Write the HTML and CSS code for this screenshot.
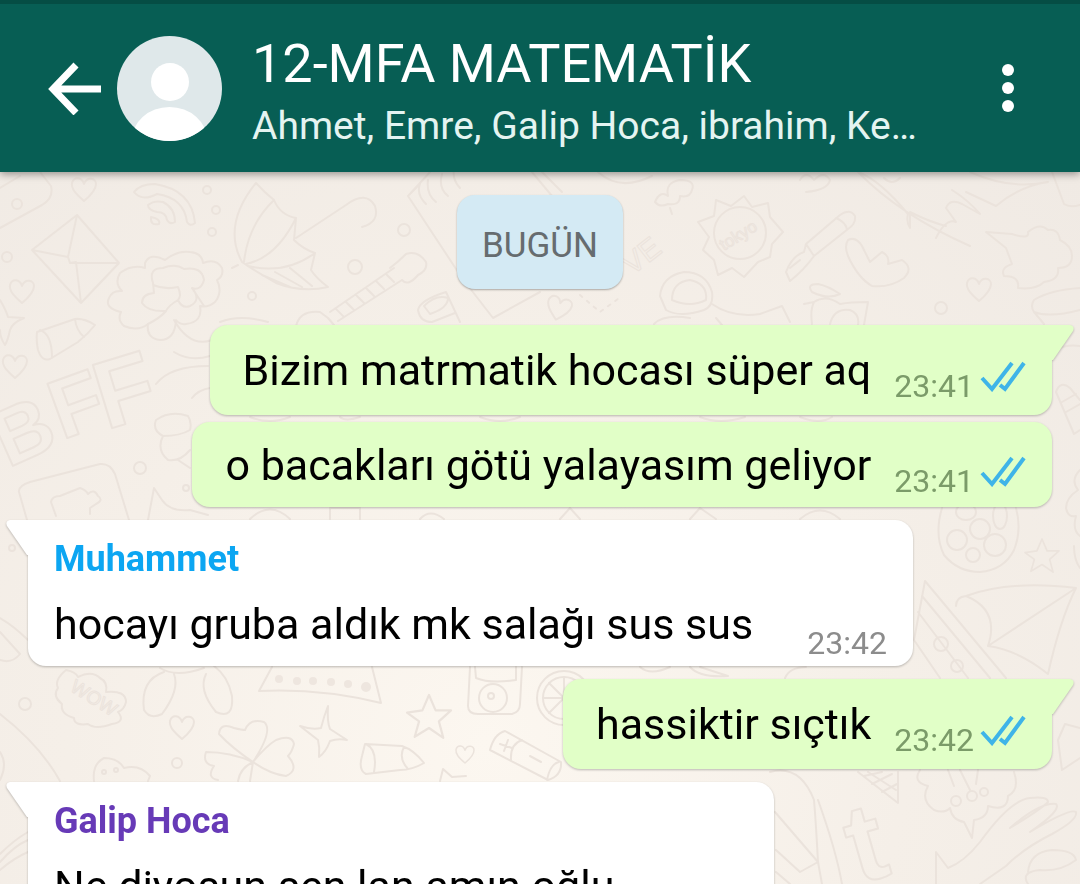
FILE: index.html
```html
<!DOCTYPE html>
<html lang="tr">
<head>
    <meta charset="utf-8">
    <meta name="viewport" content="width=device-width, initial-scale=1">
    <title>12-MFA MATEMATİK</title>
    <link rel="stylesheet" href="styles.css">
</head>
<body>
    <header class="topbar">
        <button class="back" aria-label="Geri">
            <svg width="54" height="54" viewBox="0 0 54 54"><path d="M28 4L5 28L28 52M5 28H53" fill="none" stroke="#fff" stroke-width="7"/></svg>
        </button>
        <svg class="avatar" width="105" height="105" viewBox="0 0 105 105">
            <defs><clipPath id="round"><circle cx="52.5" cy="52.5" r="52.5"/></clipPath></defs>
            <g clip-path="url(#round)">
                <rect width="105" height="105" fill="#dfe8ea"/>
                <circle cx="53" cy="46" r="19" fill="#fff"/>
                <ellipse cx="52.5" cy="105" rx="38" ry="34" fill="#fff"/>
            </g>
        </svg>
        <div class="titles">
            <h1 class="group-name">12-MFA MATEMATİK</h1>
            <p class="members">Ahmet, Emre, Galip Hoca, ibrahim, Ke…</p>
        </div>
        <button class="menu" aria-label="Menü">
            <svg width="12" height="48" viewBox="0 0 12 48" fill="#fff"><circle cx="6" cy="6" r="6"/><circle cx="6" cy="24" r="6"/><circle cx="6" cy="42" r="6"/></svg>
        </button>
    </header>
    <main class="chat">
        <svg class="wallpaper" viewBox="0 172 1080 712" preserveAspectRatio="xMidYMin slice" aria-hidden="true">
            <defs>
                <path id="heart" d="M0 12C-8 5-13 0-12-6C-10-13-2-12 0-5C3-13 12-11 12-5C12 1 6 7 0 12Z"/>
                <path id="star" d="M0-20L6-6L20-6L9 4L13 19L0 10L-13 18L-9 4L-20-4L-6-6Z"/>
            </defs>
            <!-- top left: card, envelope, wifi -->
            <path d="M40 172L51 186Q54 198 42 205L0 228M0 188L20 176"/>
            <circle cx="17" cy="204" r="5"/>
            <use href="#heart" transform="translate(84 189)"/>
            <path d="M77 215L32 250L81 303L119 263ZM32 250L68 257L77 215M68 257L70 263L119 263M70 263L76 262L81 303"/>
            <path d="M134 192Q140 184 155 184Q192 190 195 223Q190 227 187 222Q184 198 157 194Q142 202 134 192ZM148 205Q154 200 163 202Q175 208 175 222Q170 225 167 220Q166 212 157 212Q148 210 148 205Z"/>
            <path d="M151 217Q161 219 159 224Q150 226 151 217Z"/>
            <circle cx="207" cy="190" r="4"/><circle cx="216" cy="210" r="4"/><circle cx="212" cy="232" r="4"/>
            <circle cx="7" cy="257" r="5"/>
            <use href="#heart" transform="translate(22 291)"/>
            <path d="M0 300Q6 310 8 317L24 318Q12 323 10 330Q8 340 5 345Q0 338 0 330"/>
            <!-- cloud flower -->
            <path d="M145 263Q150 252 165 260Q178 250 190 252Q202 253 203 263Q216 258 222 268Q224 276 217 280Q223 292 215 302Q208 308 200 306Q203 322 186 324Q180 325 176 320Q175 340 160 340Q146 338 148 324Q138 332 124 326Q117 320 121 312Q104 308 109 298Q112 290 122 291Q114 283 120 273Q132 264 145 268Z"/>
            <path d="M153 283Q148 268 163 268Q175 263 184 269Q202 266 204 280Q201 291 192 288Q202 300 190 306Q182 309 178 300Q168 306 166 311Q148 312 142 303Q142 294 154 293ZM153 285Q165 290 178 287Q182 296 178 300M166 311Q160 318 148 324M192 288L204 306"/>
            <!-- umbrella -->
            <path d="M256 183Q222 225 242 262Q250 268 276 283Q302 293 328 287Q316 278 311 270L315 253Q303 249 294 240L296 218Q280 215 274 200Q264 192 256 183ZM244 262Q248 225 274 200M246 264Q276 258 296 218M248 266Q285 275 315 253M296 238L346 205Q366 190 375 206Q380 222 362 227M238 265L232 268M262 275L290 287M275 272L302 287M290 268L312 286"/>
            <!-- guitar -->
            <path d="M296 326Q300 310 320 312L328 318L334 325M330 312L394 268M338 321L402 280M336 309L344 317M346 302L354 310M356 295L364 303M366 288L374 296M376 281L384 289M386 274L394 282M390 268Q398 262 406 254Q418 250 426 262Q428 270 418 275Q408 287 402 280"/>
            <circle cx="355" cy="267" r="7"/><circle cx="404" cy="230" r="6"/><circle cx="252" cy="296" r="4"/>
            <!-- notepad and cup -->
            <path d="M430 172L408 196L462 278L493 318L540 292M408 196L420 184Q416 194 426 204M428 180Q426 194 436 202M442 174Q438 188 448 196M454 168Q452 180 460 188M418 310Q420 300 446 292L460 322M418 310Q420 322 432 322L455 313M424 306Q436 294 448 298Q448 308 430 314Z"/>
            <path d="M532 172L552 196M542 172L562 192M598 172Q620 192 652 176"/>
            <use href="#heart" transform="translate(559 308) rotate(15)"/>
            <path d="M580 295L600 312L622 296M586 288L604 280" stroke-dasharray="3 6"/>
            <text x="632" y="276" class="scribble" font-size="30" transform="rotate(-38 632 276)">VE</text>
            <!-- crayon, left letters, cushion -->
            <path d="M37 332L75 319Q84 318 95 325Q88 334 78 342L50 359Q42 362 38 350Q36 340 37 332ZM40 330Q52 334 52 358M75 319Q76 330 84 337"/>
            <use href="#heart" transform="translate(15 366)"/>
            <g class="letters">
                <text x="8" y="468" font-size="80" transform="rotate(-24 8 468)">B</text>
                <text x="62" y="440" font-size="84" transform="rotate(-20 62 440)">F</text>
                <text x="106" y="430" font-size="96" transform="rotate(-17 106 430)">F</text>
            </g>
            <path d="M27 520L19 492Q18 486 30 482L100 464Q110 463 115 474L129 520M56 516L51 502Q52 496 60 496L80 488Q86 490 88 494Q94 488 98 496Q104 500 96 504L90 508V514"/>
            <path d="M174 320Q190 348 212 340M174 352Q190 362 210 356M156 384Q170 366 208 366M192 398Q198 390 210 388M220 322Q240 314 268 322"/>
            <path d="M163 436Q152 430 156 420Q170 410 188 416Q192 422 190 430Q180 436 163 436Q156 450 168 460Q180 462 190 450M178 460L190 468M148 520L154 488L162 500Q170 512 190 510L208 515"/>
            <circle cx="140" cy="468" r="6"/><circle cx="186" cy="488" r="3"/>
            <!-- gap between bubbles -->
            <path d="M250 417Q270 425 290 417M340 417Q345 422 360 417M480 417Q500 425 520 417M700 417Q720 425 745 417M800 417Q820 425 832 417M250 519Q270 500 290 519M330 519V508H360V519M420 519Q430 508 444 519M560 519L570 508L580 519M690 519L700 508L716 519M800 519Q820 502 840 519"/>
            <!-- stamp -->
            <path d="M744 196L752 207L768 203L770 217L783 232L772 244L770 257L758 262L744 277L732 268L718 275L714 260L703 250L709 237L698 222L714 216L716 200L731 206Z"/>
            <circle cx="740" cy="233" r="26"/>
            <text x="724" y="251" class="scribble" font-size="17" transform="rotate(-32 724 251)">tokyo</text>
            <path d="M655 202Q660 190 668 196Q665 182 680 180Q696 180 692 190Q690 198 680 196Q680 206 668 204Q660 208 655 202M670 208L672 214"/>
            <!-- pen, mitten, surfboard -->
            <path d="M806 244L840 215Q850 208 855 216Q856 224 848 229L814 256ZM806 244L804 252Q792 256 786 272L790 281Q804 270 814 256M836 218Q846 222 847 230M790 268L800 260"/>
            <path d="M848 240Q856 236 862 246L870 262L882 252Q890 256 888 264L902 260Q914 268 904 278Q890 288 872 286Q858 278 848 256Q844 246 848 240Z"/>
            <path d="M858 172Q900 215 970 246M858 172Q880 180 908 214Q906 222 910 228L910 212Q930 222 946 226M900 178Q892 186 884 178M936 238Q946 218 956 222L946 208Q950 198 962 204L980 214Q968 200 952 190M970 172Q1010 190 1048 182Q1020 186 996 206L966 192M800 180Q806 170 814 180Q824 170 830 180Q828 190 806 192"/>
            <path d="M1052 172L1064 204Q1070 208 1080 205"/>
            <!-- tree, astronaut, bird -->
            <path d="M986 232L1012 234Q1030 240 1028 232Q1040 222 1048 230Q1058 228 1060 240Q1072 246 1072 256Q1072 268 1058 268Q1060 280 1044 282Q1036 290 1018 288Q1020 276 1004 276Q1000 268 1012 264L1006 248Z"/>
            <use href="#heart" transform="translate(979 289)"/>
            <circle cx="941" cy="308" r="6"/>
            <path d="M1080 288Q1050 290 1034 300Q1030 306 1034 312Q1050 318 1080 310M1034 312L1044 324M1056 350Q1066 344 1080 346"/>
            <path d="M660 296Q662 276 684 272Q706 272 712 292Q714 306 704 310Q680 318 666 310ZM672 300Q672 282 690 280Q708 284 706 300Q690 308 672 300ZM654 324Q664 314 690 318M712 304Q732 318 760 314L782 306L790 322M716 318L722 325M812 324Q810 310 814 302L804 304M814 302Q826 294 840 304Q850 302 868 302L864 325M830 324Q834 308 850 310Q860 314 858 325M812 292Q806 284 818 284Q828 286 840 294Q828 300 812 292Z"/>
            <!-- right: pencil, palette, paper boat -->
            <path d="M1056 392Q1060 380 1070 388L1080 400M1056 392L1074 434L1080 430M1062 402L1076 394M1066 412L1080 404"/>
            <path d="M1080 470Q1070 480 1078 490Q1066 498 1066 508Q1068 518 1076 516Q1072 530 1080 536M1074 546Q1074 560 1080 568"/>
            <path d="M942 508Q934 535 944 555Q958 572 980 572Q1004 570 1014 550Q1022 530 1016 508"/>
            <circle cx="957" cy="540" r="10"/><circle cx="980" cy="529" r="10"/><circle cx="995" cy="545" r="11"/><circle cx="973" cy="555" r="7"/>
            <ellipse cx="1000" cy="516" rx="7" ry="13"/><ellipse cx="966" cy="512" rx="10" ry="8"/>
            <use href="#star" transform="translate(1042 556) scale(.85)"/>
            <path d="M925 581L914 640L940 678M925 581L1006 678M922 596L990 678M918 612L968 678M956 606Q956 597 966 596Q1010 580 1076 588Q1060 620 1048 674Q1018 650 988 646Q1000 610 966 596M988 646L1076 588"/>
            <circle cx="941" cy="644" r="7"/><circle cx="957" cy="666" r="6"/>
            <path d="M1080 728L1065 724L1058 740L1062 770L1080 758"/>
            <!-- left edge beside the bubble -->
            <circle cx="12" cy="548" r="3"/><path d="M0 618Q14 626 28 640M0 632L20 654Q12 664 0 660"/>
            <circle cx="25" cy="704" r="6"/>
            <path d="M66 670Q76 672 78 677Q92 670 100 678Q108 682 106 692Q126 690 126 702Q124 710 118 712Q126 722 112 724Q96 730 88 724Q74 726 74 718Q60 714 62 704Q52 696 58 688Q54 680 66 670Z"/>
            <text x="69" y="690" class="scribble" font-size="19" transform="rotate(32 69 690)">WOW</text>
            <path d="M160 668Q176 678 204 668M164 672Q140 680 144 710Q150 720 162 714Q180 690 174 674M206 674Q198 690 216 712Q234 720 232 696Q228 676 214 666"/>
            <use href="#heart" transform="translate(182 727)"/>
            <path d="M272 667L259 691Q320 688 381 703L372 667"/>
            <g class="dots"><circle cx="279" cy="679" r="4"/><circle cx="297" cy="681" r="4"/><circle cx="313" cy="681" r="4"/><circle cx="331" cy="682" r="4"/><circle cx="348" cy="684" r="4"/><circle cx="366" cy="687" r="5"/></g>
            <!-- clover -->
            <path d="M253 762Q232 748 219 734Q220 722 234 728Q242 730 245 730Q250 718 264 722Q274 730 253 762Q266 746 276 740Q292 734 294 744Q292 752 288 756Q300 770 286 776Q270 774 253 762Q230 752 206 752Q202 764 214 766Q206 778 218 780M253 762Q240 768 238 781M253 762L250 781"/>
            <path d="M328 706Q327 722 330 729L347 740Q338 738 330 741Q326 752 319 757Q320 748 318 740L300 726Q312 730 321 728Q324 716 328 706Z"/>
            <use href="#star" transform="translate(429 717) scale(1.1)"/>
            <path d="M365 744L402 746Q414 750 424 763Q412 770 400 770L366 774Q358 770 362 756ZM366 744Q378 750 374 772M404 747Q398 758 408 769"/>
            <use href="#heart" transform="translate(465 754) scale(.75)"/>
            <path d="M505 731Q494 734 490 750L548 780Q562 776 561 762L505 731ZM522 740Q510 744 511 760M559 762Q550 764 547 780M500 744L512 748M508 740L504 751M530 756L541 762"/>
            <path d="M470 667L468 706Q468 714 478 714H512Q520 712 520 704L522 667M475 667L476 678Q490 684 516 680V667"/>
            <circle cx="493" cy="698" r="14"/><circle cx="491" cy="696" r="3"/>
            <circle cx="564" cy="698" r="27"/><circle cx="564" cy="698" r="21"/><path d="M564 677V719M543 698H585M549 683L579 713M549 713L579 683"/>
            <path d="M640 667Q650 676 670 667M690 667Q700 678 728 676L700 667M785 678Q790 667 806 667"/>
            <path d="M440 781L443 769L452 777L466 776M94 781Q92 764 104 758Q118 758 124 768Q140 764 150 776L148 781"/>
            <circle cx="177" cy="763" r="5"/><circle cx="104" cy="772" r="2"/><circle cx="116" cy="770" r="2"/>
            <path d="M0 714Q40 745 60 781M0 752Q8 764 0 780M0 854Q14 840 28 832M0 862Q14 846 28 840M0 870Q14 858 28 852"/>
            <!-- bottom right: rocket, cone, letter, bush, hand -->
            <path d="M770 772Q800 764 814 800Q816 824 818 862M818 800Q836 850 842 884M775 812L818 862L800 872L776 850M818 862L822 884M776 872L790 884"/>
            <path d="M858 772L898 803V772M864 776L882 772M872 784L892 774M882 792L897 784M868 772L896 790"/>
            <g class="letters">
                <text x="858" y="884" font-size="110" transform="rotate(-16 858 884)">t</text>
            </g>
            <path d="M920 770Q912 782 928 786Q920 800 934 810Q944 814 950 808Q952 820 964 822L972 838L974 820Q988 818 988 806Q1008 812 1008 796Q1020 790 1014 772M948 770L954 786M960 770L970 790M978 770L976 784"/>
            <circle cx="956" cy="801" r="5"/><circle cx="972" cy="796" r="5"/><circle cx="984" cy="792" r="4"/>
            <path d="M936 884L936 852L948 868Q964 862 980 842Q1010 800 1030 798Q1048 796 1048 802Q1040 810 1010 828Q1040 802 1056 804Q1062 810 1030 832Q1070 808 1076 812Q1078 820 1052 834Q1024 848 1006 866L980 884M1028 872Q1030 852 1052 850Q1074 850 1076 860Q1060 872 1040 870Q1020 872 1028 884"/>
        </svg>
        <div class="day">BUGÜN</div>
        <div class="message out tail">
            <p class="text">Bizim matrmatik hocası süper aq</p>
            <span class="time">23:41</span>
            <svg class="ticks" width="46" height="31" viewBox="0 0 46 31"><path d="M2 17L12 28L32 2M20 24L25 28L44 2"/></svg>
        </div>
        <div class="message out">
            <p class="text">o bacakları götü yalayasım geliyor</p>
            <span class="time">23:41</span>
            <svg class="ticks" width="46" height="31" viewBox="0 0 46 31"><path d="M2 17L12 28L32 2M20 24L25 28L44 2"/></svg>
        </div>
        <div class="message in tail">
            <div>
                <div class="sender blue">Muhammet</div>
                <p class="text">hocayı gruba aldık mk salağı sus sus</p>
            </div>
            <span class="time">23:42</span>
        </div>
        <div class="message out tail">
            <p class="text">hassiktir sıçtık</p>
            <span class="time">23:42</span>
            <svg class="ticks" width="46" height="31" viewBox="0 0 46 31"><path d="M2 17L12 28L32 2M20 24L25 28L44 2"/></svg>
        </div>
        <div class="message in tail">
            <div>
                <div class="sender purple">Galip Hoca</div>
                <p class="text">Ne diyosun sen lan amın oğlu</p>
            </div>
            <span class="time">23:42</span>
        </div>
    </main>
</body>
</html>
```

FILE: styles.css
```css
* {
    box-sizing: border-box;
}

body {
    margin: 0;
    height: 100vh;
    display: flex;
    flex-direction: column;
    overflow: hidden;
    font-family: Roboto, "Noto Sans", sans-serif;
    background-color: #f5efe8;
}

h1, p {
    margin: 0;
    font-weight: normal;
}

button {
    display: flex;
    padding: 0;
    border: none;
    background: none;
    cursor: pointer;
}

.topbar {
    position: relative;
    z-index: 1;
    display: flex;
    align-items: center;
    flex: none;
    height: 172px;
    padding: 0 66px 0 48px;
    border-top: 4px solid #054d44;
    background-color: #075e54;
    box-shadow: 0 2px 8px rgba(0, 0, 0, 0.4);
    color: #fff;
}

.avatar {
    flex: none;
    margin-left: 15px;
}

.titles {
    flex: 1;
    min-width: 0;
    margin-left: 30px;
    padding-top: 12px;
}

.group-name {
    font-size: 54px;
    line-height: 64px;
}

.members {
    font-size: 39px;
    line-height: 60px;
    color: #e4f4f1;
}

.chat {
    position: relative;
    flex: 1;
    display: flex;
    flex-direction: column;
    align-items: flex-start;
    min-height: 0;
    padding: 23px 28px;
    overflow: hidden;
    background: radial-gradient(ellipse at 45% 80%, #fcf7f0, #f5efe8 50%, #f0eae4);
}

/* Doodles behind the messages */
.wallpaper {
    position: absolute;
    top: 0;
    left: 0;
    width: 100%;
    height: 100%;
    fill: none;
    stroke: #ebe3dc;
    stroke-width: 2;
    stroke-linejoin: round;
    stroke-linecap: round;
    font-family: "Liberation Sans", sans-serif;
}

.letters {
    font-weight: bold;
}

.scribble {
    stroke-width: 1;
}

.dots {
    fill: #eee6df;
    stroke: none;
}

.day {
    position: relative;
    align-self: center;
    flex: none;
    margin-bottom: 30px;
    padding: 8px 25px 0;
    border-radius: 18px;
    background-color: #d4eaf4;
    box-shadow: 0 1px 2px rgba(0, 0, 0, 0.3);
    color: #666c6f;
    font-size: 35px;
    line-height: 86px;
}

.message {
    position: relative;
    display: flex;
    flex: none;
    align-items: flex-end;
    margin-bottom: 7px;
    border-radius: 18px;
    filter: drop-shadow(0 1px 1px rgba(0, 0, 0, 0.25));
}

.out {
    align-self: flex-end;
    padding: 14px 26px 13px 33px;
    background-color: #e1ffc7;
}

.in {
    padding: 14px 26px 10px;
    background-color: #fff;
}

/* First message of a group gets the pointed corner */
.tail {
    margin-top: 6px;
}

.tail::before {
    content: "";
    position: absolute;
    top: 0;
    width: 22px;
    height: 36px;
    background-color: inherit;
    clip-path: path("M0 0H18Q23 1 21 6L1 35H0Z");
}

.out.tail {
    padding-top: 16px;
    padding-bottom: 16px;
    border-top-right-radius: 0;
}

.out.tail::before {
    left: 100%;
}

.in.tail {
    border-top-left-radius: 0;
}

.in.tail::before {
    right: 100%;
    transform: scaleX(-1);
}

.text {
    font-size: 43px;
    line-height: 58px;
}

.in .text {
    margin-bottom: 3px;
}

.time {
    margin-left: 23px;
    color: #8c8c8c;
    font-size: 32px;
    line-height: 26px;
}

.in .time {
    margin-left: 54px;
}

.out .time {
    color: #7b9b69;
}

.ticks {
    margin: 0 0 7px 6px;
    fill: none;
    stroke: #3fb4e8;
    stroke-width: 4;
}

.sender {
    margin-bottom: 11px;
    font-size: 36px;
    font-weight: bold;
    line-height: 50px;
}

.blue {
    color: #0ca6f2;
}

.purple {
    color: #673ab7;
}
```
